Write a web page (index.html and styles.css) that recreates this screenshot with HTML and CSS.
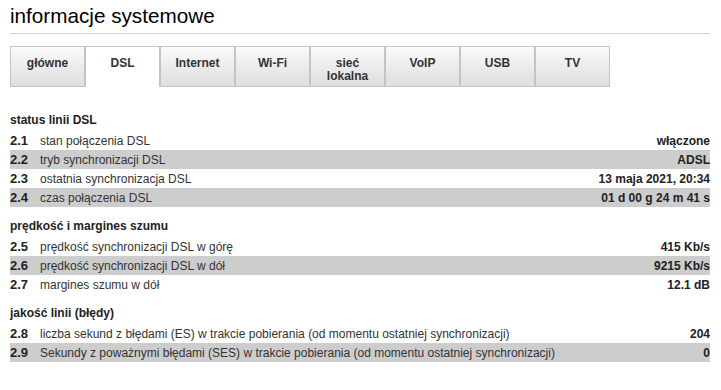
FILE: index.html
```html
<!DOCTYPE html>
<html>
<head>
    <title>informacje systemowe</title>
    <link rel="stylesheet" href="styles.css">
</head>
<body>
    <div class="container">
        <h1>informacje systemowe</h1>
        <div class="tabs">
            <div class="tab">główne</div>
            <div class="tab active">DSL</div>
            <div class="tab">Internet</div>
            <div class="tab">Wi-Fi</div>
            <div class="tab">sieć<br>lokalna</div>
            <div class="tab">VoIP</div>
            <div class="tab">USB</div>
            <div class="tab">TV</div>
        </div>

        <div class="section">
            <div class="section-title">status linii DSL</div>
            <div class="row"><span class="num">2.1</span><span class="label">stan połączenia DSL</span><span class="value">włączone</span></div>
            <div class="row alt"><span class="num">2.2</span><span class="label">tryb synchronizacji DSL</span><span class="value">ADSL</span></div>
            <div class="row"><span class="num">2.3</span><span class="label">ostatnia synchronizacja DSL</span><span class="value">13 maja 2021, 20:34</span></div>
            <div class="row alt"><span class="num">2.4</span><span class="label">czas połączenia DSL</span><span class="value">01 d 00 g 24 m 41 s</span></div>
        </div>

        <div class="section">
            <div class="section-title">prędkość i margines szumu</div>
            <div class="row"><span class="num">2.5</span><span class="label">prędkość synchronizacji DSL w górę</span><span class="value">415 Kb/s</span></div>
            <div class="row alt"><span class="num">2.6</span><span class="label">prędkość synchronizacji DSL w dół</span><span class="value">9215 Kb/s</span></div>
            <div class="row"><span class="num">2.7</span><span class="label">margines szumu w dół</span><span class="value">12.1 dB</span></div>
        </div>

        <div class="section">
            <div class="section-title">jakość linii (błędy)</div>
            <div class="row"><span class="num">2.8</span><span class="label">liczba sekund z błędami (ES) w trakcie pobierania (od momentu ostatniej synchronizacji)</span><span class="value">204</span></div>
            <div class="row alt"><span class="num">2.9</span><span class="label">Sekundy z poważnymi błędami (SES) w trakcie pobierania (od momentu ostatniej synchronizacji)</span><span class="value">0</span></div>
        </div>
    </div>
</body>
</html>
```

FILE: styles.css
```css
body {
    font-family: "Liberation Sans", Arial, sans-serif;
    background-color: #fff;
    color: #333;
    margin: 0;
}

.container {
    width: 700px;
    padding: 0 10px;
}

h1 {
    margin: 0;
    padding-top: 4px;
    padding-bottom: 5px;
    font-size: 20.7px;
    line-height: 24px;
    font-weight: normal;
    color: #000;
    border-bottom: 1px solid #d0d0d0;
}

.tabs {
    display: flex;
    margin-top: 12px;
}

.tab {
    width: 73px;
    height: 29px;
    padding-top: 10px;
    border: 1px solid #c4c4c4;
    background: linear-gradient(#fafafa, #dedede);
    text-align: center;
    font-size: 12px;
    line-height: 13px;
    font-weight: bold;
    color: #333;
}

.tab.active {
    background: #fff;
    border-bottom: none;
    height: 30px;
}

.section {
    margin-top: 9px;
}

.tabs + .section {
    margin-top: 23px;
}

.section-title {
    font-size: 12px;
    font-weight: bold;
    line-height: 21px;
    color: #222;
}

.row {
    display: flex;
    align-items: center;
    height: 19px;
    font-size: 12px;
}

.row.alt {
    background-color: #cdcdcd;
}

.num {
    width: 30px;
    font-size: 13px;
    font-weight: bold;
    color: #222;
}

.label {
    flex: 1;
    color: #333;
}

.value {
    font-weight: bold;
    color: #222;
    text-align: right;
}
```
